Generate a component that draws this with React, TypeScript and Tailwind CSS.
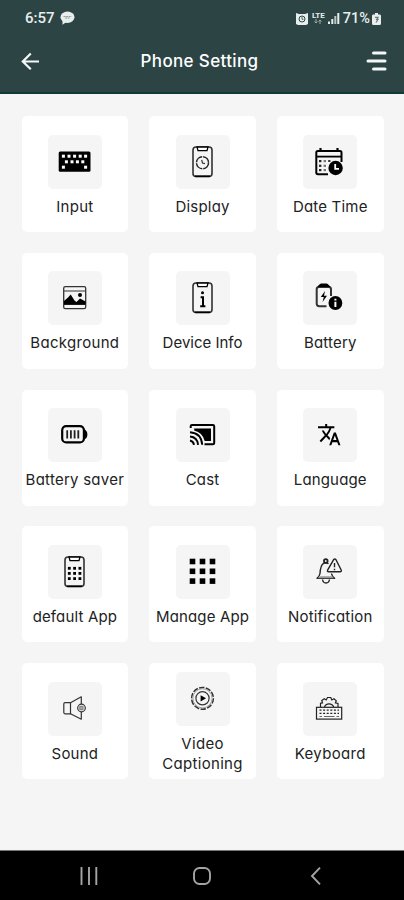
import React from 'react';

const PhoneFrame: React.FC<{ children: React.ReactNode }> = ({ children }) => (
    <>
        <rect x="17" y="12" width="19" height="29.4" rx="3" fill="none" stroke="#333" strokeWidth="1.6" />
        <path d="M19 41.3H34" stroke="black" strokeWidth="1.6" />
        <path d="M21 12H32L31 15.6H22Z" fill="white" stroke="black" strokeWidth="1.3" />
        {children}
    </>
);

const InputIcon = () => (
    <>
        <rect x="10.7" y="16.5" width="31.8" height="20.3" rx="1.5" />
        {[15.4, 21, 26.6, 32.2, 37.6].map((x) => <rect key={x} x={x - 1.5} y="19.7" width="3" height="3" fill="white" />)}
        {[18.4, 24, 29.4, 34.8].map((x) => <rect key={x} x={x - 1.5} y="25.3" width="3" height="3" fill="white" />)}
        {[15.4, 37.6].map((x) => <rect key={x} x={x - 1.5} y="30.7" width="3" height="3" fill="white" />)}
    </>
);

const DisplayIcon = () => (
    <PhoneFrame>
        <circle cx="26.5" cy="27.7" r="6" fill="none" stroke="#222" strokeWidth="1.5" strokeDasharray="8.4 1" />
        <path d="M25.7 24.8L26.5 28L29 28.6" fill="none" stroke="#333" strokeWidth="1.2" />
    </PhoneFrame>
);

const DateIcon = () => (
    <>
        <path d="M38.5 27V17.5Q38.5 16 37 16H14.8Q13.3 16 13.3 17.5V37.5Q13.3 39.3 15 39.3H25" fill="none" stroke="black" strokeWidth="2" />
        <path d="M13 21.6H39" stroke="black" strokeWidth="1.8" />
        <path d="M17.5 13V17M34.5 13V17" stroke="black" strokeWidth="2.2" />
        {[26, 30.7, 35].map((y) => (
            <g key={y}>
                <rect x="16" y={y - 1} width="2.4" height="2.2" fill="#222" />
                <rect x="20.6" y={y - 1} width="2.4" height="2.2" fill="#777" />
            </g>
        ))}
        <rect x="25.2" y="25" width="2.2" height="2" fill="#333" />
        <circle cx="32.6" cy="33" r="7.2" />
        <path d="M32.2 29V33.8H36" fill="none" stroke="white" strokeWidth="1.8" />
    </>
);

const BackgroundIcon = () => (
    <>
        <rect x="15.7" y="15.7" width="22" height="22" rx="1.6" fill="none" stroke="#333" strokeWidth="1.3" />
        <path d="M16 20H37.5M16 33.5H37.5" stroke="#333" strokeWidth="1.2" />
        <path d="M16 33.5V30L20 26.5L22.7 23.5L26.5 29.5L28.5 31L32 27.5L37.6 30.5V33.5Z" />
        <circle cx="32" cy="24" r="2" />
    </>
);

const InfoIcon = () => (
    <PhoneFrame>
        <circle cx="26.5" cy="21.8" r="1.5" />
        <path d="M24.6 26.3H27V35.3M24.2 35.3H29.4" fill="none" stroke="black" strokeWidth="2" />
    </PhoneFrame>
);

const BatteryIcon = () => (
    <>
        <path d="M28 25V18.3Q28 15.7 25.4 15.7H16.3Q13.7 15.7 13.7 18.3V32.6Q13.7 35.3 16.3 35.3H23.5" fill="none" stroke="#333" strokeWidth="2" />
        <path d="M15.5 16V15L17.5 13H24L26.4 15V16Z" stroke="black" />
        <path d="M22 20L17.8 26H20.8L19.5 31L24 24.8H21Z" />
        <circle cx="32.4" cy="32" r="6.9" />
        <path d="M32.4 27.7V29.5M32.4 30.7V36" stroke="white" strokeWidth="2" />
    </>
);

const SaverIcon = () => (
    <>
        <rect x="14.2" y="18.2" width="21.7" height="16.2" rx="4" fill="none" stroke="black" strokeWidth="2.2" />
        <path d="M36 20.9Q39.4 22.6 39.4 26.4Q39.4 30 36 31.7Z" />
        <path d="M19.2 22.3V30.5M22.9 22.3V30.5M26.6 22.3V30.5M30.3 22.3V30.5" stroke="#222" strokeWidth="1.8" />
    </>
);

const CastIcon = () => (
    <>
        <path d="M14.7 20V18.3Q14.7 16.9 16 16.9H36.8Q38.2 16.9 38.2 18.3V35Q38.2 36.3 36.8 36.3H28.5" fill="none" stroke="black" strokeWidth="2" />
        <path d="M18.2 20.5H35V33H28.7Q26.8 24.5 18.2 22.4Z" />
        <path d="M14 24.2Q25.4 25 26.2 36.8M14 28.5Q21.4 29.2 22.1 36.8M14 32.5Q17.5 33.2 18 36.8" fill="none" stroke="black" strokeWidth="1.9" />
    </>
);

const LanguageIcon = () => (
    <path
        transform="translate(14 14) scale(1.02 1.06)"
        d="m12.87 15.07-2.54-2.51.03-.03A17.52 17.52 0 0 0 14.07 6H17V4h-7V2H8v2H1v1.99h11.17C11.5 7.92 10.44 9.75 9 11.35 8.07 10.32 7.3 9.19 6.69 8h-2c.73 1.63 1.73 3.17 2.98 4.56l-5.09 5.02L4 19l5-5 3.11 3.11.76-2.04zM18.5 10h-2L12 22h2l1.12-3h4.75L21 22h2l-4.5-12zm-2.62 7 1.62-4.33L19.12 17h-3.24z"
    />
);

const DefaultAppIcon = () => (
    <PhoneFrame>
        {[23.3, 28.4, 33.6].map((y) => [21.3, 26.6, 31.9].map((x) => (
            <rect key={`${x}-${y}`} x={x - 1.4} y={y - 1.4} width="2.8" height="2.8" />
        )))}
    </PhoneFrame>
);

const ManageIcon = () => (
    <>
        {[13.7, 23.5, 33.3].map((y) => [13.7, 23.7, 33.7].map((x) => (
            <rect key={`${x}-${y}`} x={x} y={y} width="5.6" height="5.6" />
        )))}
    </>
);

const NotificationIcon = () => (
    <g fill="none" stroke="#222" strokeWidth="1.4" strokeLinejoin="round">
        <path d="M17 28.5Q17.5 20 20.5 18.3Q23 17 25.5 18.8M28.5 28.5Q29 31.5 31.6 33.3H14Q16.5 31.5 17 28.5" />
        <path d="M17 31.2H29L31 33.3H14.5Z" fill="#999" stroke="none" />
        <path d="M19.5 34.5Q20 38 23 38Q26 38 26.5 34.5" />
        <circle cx="22.8" cy="16" r="1.8" strokeWidth="1.8" />
        <path d="M31 14.3Q32 13.5 33 14.7L38.3 25.2Q38.5 26.7 37.2 26.7H25.5Q24 26.7 24.6 25.2L30.2 15.3Z" fill="#f5f5f5" />
        <path d="M31.5 18V22.2M31.5 23.7V25.2" />
    </g>
);

const SoundIcon = () => (
    <g fill="none" stroke="#333" strokeWidth="1.2" strokeLinejoin="round">
        <path d="M22.5 20.7H17Q15.8 20.7 15.8 22V30.6Q15.8 31.8 17 31.8H22.5Z" />
        <path d="M22.5 20.7L33.3 14.8V22M33.3 30V37.2L22.5 31.8" />
        <circle cx="33.5" cy="26" r="3.8" />
        <rect x="31.8" y="24.4" width="3.2" height="3.2" fill="#aaa" stroke="#888" />
    </g>
);

const VideoIcon = () => (
    <g fill="none" stroke="#333" strokeWidth="1.2">
        <circle cx="26.5" cy="26.3" r="10.9" strokeWidth="1.5" strokeDasharray="5.4 1.4" />
        <circle cx="26.5" cy="26.3" r="9.6" stroke="#999" strokeWidth="0.9" />
        <circle cx="26.5" cy="26.3" r="6.6" />
        <path d="M25.2 24.2L28.8 26.3L25.2 28.4Z" fill="black" stroke="black" />
    </g>
);

const KeyboardIcon = () => (
    <g fill="none" stroke="#222" strokeWidth="1.2">
        <rect x="13.5" y="25.3" width="25.2" height="11.8" />
        <path d="M17.5 25V21.3L19.5 20.8L18.8 18.5L21.3 16.8L23.2 18L24.5 15.5H27.8L28.8 18L31 16.8L33.3 18.8L32.4 20.8L35 21.5V25" />
        <path d="M21.5 25Q22.5 21.8 26 21.8Q29.6 21.8 30.7 25" />
        <path d="M16.5 28.2H36M16.5 31.4H36" strokeDasharray="2 1.6" />
        <path d="M16.5 34.5H19M21 34.5H31.5M33.5 34.5H36" stroke="#666" />
    </g>
);

interface Setting {
    label: string;
    icon: React.FC;
    tracking: string;
}

const settings: Setting[] = [
    { label: 'Input', icon: InputIcon, tracking: 'tracking-[0.3px]' },
    { label: 'Display', icon: DisplayIcon, tracking: 'tracking-[0.2px]' },
    { label: 'Date Time', icon: DateIcon, tracking: 'tracking-[0.2px]' },
    { label: 'Background', icon: BackgroundIcon, tracking: 'tracking-[0.3px]' },
    { label: 'Device Info', icon: InfoIcon, tracking: 'tracking-normal' },
    { label: 'Battery', icon: BatteryIcon, tracking: 'tracking-[0.2px]' },
    { label: 'Battery saver', icon: SaverIcon, tracking: 'tracking-[0.25px]' },
    { label: 'Cast', icon: CastIcon, tracking: 'tracking-[0.2px]' },
    { label: 'Language', icon: LanguageIcon, tracking: 'tracking-[0.15px]' },
    { label: 'default App', icon: DefaultAppIcon, tracking: 'tracking-[0.15px]' },
    { label: 'Manage App', icon: ManageIcon, tracking: 'tracking-[0.15px]' },
    { label: 'Notification', icon: NotificationIcon, tracking: 'tracking-[0.2px]' },
    { label: 'Sound', icon: SoundIcon, tracking: 'tracking-[0.2px]' },
    { label: 'Video Captioning', icon: VideoIcon, tracking: 'tracking-[0.3px]' },
    { label: 'Keyboard', icon: KeyboardIcon, tracking: 'tracking-[0.35px]' },
];

const StatusBar = () => (
    <div className="flex h-9 items-center justify-between pl-[25px] pr-[23px] text-[#e8eeee]">
        <div className="flex items-center gap-[5px]">
            <span className="font-['Roboto',sans-serif] text-[15px] font-medium">6:57</span>
            <svg width="15" height="14" viewBox="0 0 15 14" fill="currentColor">
                <ellipse cx="7.5" cy="6.2" rx="7" ry="5.7" />
                <path d="M2.5 9V13.8L6.5 11Z" />
                <path d="M3.5 5.5H11.5M5 7H10" stroke="#8c9c9b" strokeWidth="1" strokeDasharray="2 .6" />
            </svg>
        </div>
        <div className="flex items-center">
            <svg className="mt-[1px]" width="12" height="12" viewBox="0 0 12 12" fill="currentColor">
                <path d="M0 0L3 1H9L12 0V11L10 12H2L0 11Z" />
                <circle cx="6" cy="6" r="3" fill="none" stroke="#2c4544" strokeWidth="1" />
                <path d="M6 4V6.3H7.5" fill="none" stroke="#2c4544" strokeWidth="0.8" />
            </svg>
            <div className="ml-[4px] flex flex-col items-center">
                <span className="font-['Roboto',sans-serif] text-[8px] font-bold leading-[7px]">LTE</span>
                <svg width="10" height="5" viewBox="0 0 10 5" fill="none" stroke="#9caaaa" strokeWidth="1">
                    <path d="M3 0V4M1.5 2.5L3 4L4.5 2.5M7 5V1M5.5 2.5L7 1L8.5 2.5" />
                </svg>
            </div>
            <svg className="ml-[3px]" width="12" height="12" viewBox="0 0 12 12" fill="currentColor">
                <path d="M0 9.5H2V12H0ZM3.3 7H5.3V12H3.3ZM9.3 1H11.3V12H9.3Z" />
                <path d="M6.3 4H8.3V12H6.3Z" opacity="0.75" />
            </svg>
            <span className="ml-[3px] mt-[1px] font-['Roboto',sans-serif] text-[14.5px] font-medium">71%</span>
            <svg className="ml-[2px] mt-[1px]" width="9" height="12" viewBox="0 0 9 12" fill="currentColor">
                <path d="M3 0H6V1.5H8Q9 1.5 9 3V10.5Q9 12 7.5 12H1.5Q0 12 0 10.5V3Q0 1.5 1 1.5H3Z" />
                <path d="M3 4.3H6L4.7 6.3H6L4 9.5" fill="none" stroke="#6a7b7a" strokeWidth="1.2" />
            </svg>
        </div>
    </div>
);

const SettingCard: React.FC<{ setting: Setting }> = ({ setting }) => {
    const Icon = setting.icon;
    return (
        <button className="flex h-[116px] flex-col items-center justify-center rounded-[5px] bg-white pt-[3px]">
            <span className="block h-[54px] w-[54px] shrink-0 rounded-[5px] bg-[#f5f5f5]">
                <svg width="54" height="54" viewBox="0 0 54 54" fill="black">
                    <Icon />
                </svg>
            </span>
            <span className={`mt-[8px] text-center text-[15px] leading-[20px] text-[#222] ${setting.tracking}`}>
                {setting.label}
            </span>
        </button>
    );
};

const App: React.FC = () => {
    return (
        <div className="flex h-[900px] w-[404px] flex-col overflow-hidden bg-[#f5f5f5] font-['Inter','Open_Sans',sans-serif] [font-feature-settings:'cv11'_1]">
            <header className="h-[94px] shrink-0 border-b-2 border-[#123a37] bg-[#2c4544]">
                <StatusBar />
                <div className="flex h-[50px] items-center justify-between pl-[21px] pr-[16px] text-white">
                    <button>
                        <svg width="19" height="18" viewBox="0 0 19 18" fill="none" stroke="#f4f7f7" strokeWidth="2.2">
                            <path d="M18 9.5H2M9.8 1.5L1.8 9.5L9.8 17.2" />
                        </svg>
                    </button>
                    <h1 className="-mt-[1px] pr-[7px] text-[17px] font-medium leading-6 tracking-[0.35px]">Phone Setting</h1>
                    <button>
                        <svg width="22" height="20" viewBox="0 0 22 20" fill="none" stroke="#f4f7f7" strokeWidth="3" strokeLinecap="round">
                            <path d="M7.5 2H19M2 10H19M7.5 18H19" />
                        </svg>
                    </button>
                </div>
            </header>

            <main className="flex-1 pl-[21.5px] pr-[20.4px] pt-[22px]">
                <div className="grid grid-cols-3 gap-x-[21px] gap-y-[20.8px]">
                    {settings.map((setting) => <SettingCard key={setting.label} setting={setting} />)}
                </div>
            </main>

            <nav className="grid h-[50px] shrink-0 grid-cols-3 items-center justify-items-center border-t border-[#777] bg-black px-[32px]">
                <svg width="18" height="18" viewBox="0 0 18 18" stroke="#a4a4a4" strokeWidth="1.9">
                    <path d="M1.5 0V18M9 0V18M16.3 0V18" />
                </svg>
                <svg width="18" height="18" viewBox="0 0 18 18" fill="none" stroke="#a4a4a4" strokeWidth="1.9">
                    <rect x="1" y="1" width="16" height="16" rx="5.5" />
                </svg>
                <svg width="11" height="18" viewBox="0 0 11 18" fill="none" stroke="#a4a4a4" strokeWidth="1.9">
                    <path d="M10 0.7L2 9L10 17.3" />
                </svg>
            </nav>
        </div>
    );
};

export default App;
